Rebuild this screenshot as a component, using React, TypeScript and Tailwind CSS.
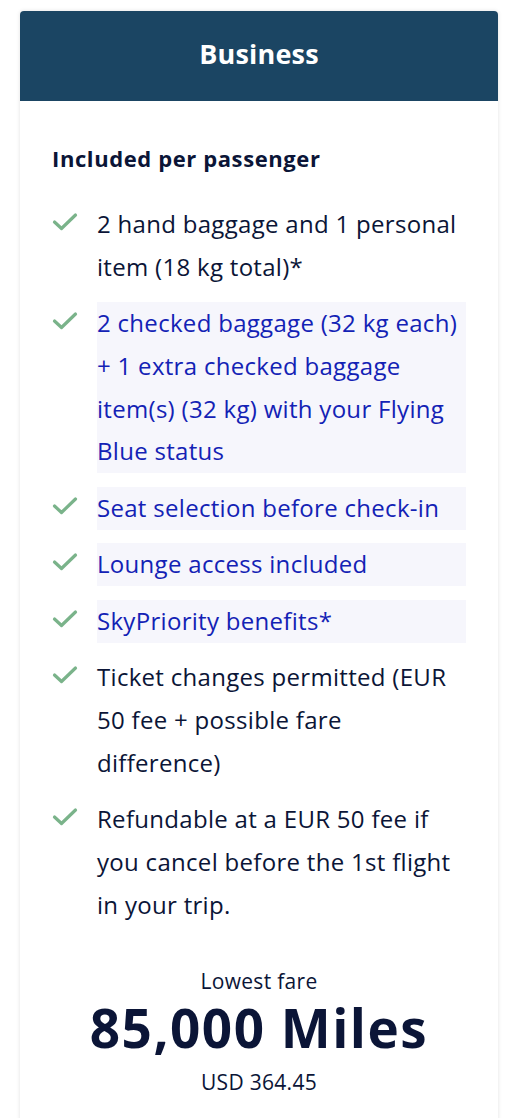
import React from "react";

interface Perk {
    text: string;
    link?: boolean;
}

const perks: Perk[] = [
    { text: "2 hand baggage and 1 personal item (18 kg total)*" },
    { text: "2 checked baggage (32 kg each) + 1 extra checked baggage item(s) (32 kg) with your Flying Blue status", link: true },
    { text: "Seat selection before check-in", link: true },
    { text: "Lounge access included", link: true },
    { text: "SkyPriority benefits*", link: true },
    { text: "Ticket changes permitted (EUR 50 fee + possible fare difference)" },
    { text: "Refundable at a EUR 50 fee if you cancel before the 1st flight in your trip." },
];

const Check: React.FC = () => (
    <svg width="26" height="20" viewBox="0 0 26 20" className="shrink-0 mt-[9px]">
        <path d="M2.5 10 L9.5 16.5 L23.5 3" fill="none" stroke="#7ab38a" strokeWidth="3.2" strokeLinecap="round" strokeLinejoin="round" />
    </svg>
);

const App: React.FC = () =>
{
    return (
        <div className="min-h-[1118px] bg-white pt-[11px] font-['Open_Sans',sans-serif]">
            <div className="mx-[20px] bg-white rounded-t-[4px] shadow-[0_0_4px_rgba(0,0,0,0.12)] overflow-hidden">
                <div className="h-[90px] pb-[4px] bg-[#1b4563] flex items-center justify-center">
                    <h1 className="text-white text-[27px] font-bold tracking-[0.2px]">Business</h1>
                </div>
                <div className="px-[32px] pt-[42px] pb-[30px]">
                    <h2 className="text-[#0b1537] text-[22px] font-bold leading-[30px] tracking-[0.6px]">Included per passenger</h2>
                    <ul className="mt-[30px] flex flex-col gap-[13.7px]">
                        {perks.map((p) => (
                            <li key={p.text} className="flex gap-[19px]">
                                <Check />
                                <span className={p.link
                                    ? "flex-1 bg-[#f6f6fc] text-[#1322b5] text-[24px] leading-[42.75px] tracking-[0.3px]"
                                    : "flex-1 text-[#0b1537] text-[24px] leading-[42.75px] tracking-[0.3px]"}>
                                    {p.text}
                                </span>
                            </li>
                        ))}
                    </ul>
                    <div className="mt-[42px] flex flex-col items-center text-[#0b1537]">
                        <span className="text-[21px] leading-[26px] tracking-[0.3px]">Lowest fare</span>
                        <span className="text-[53px] font-bold leading-[68px] tracking-[1.5px]">85,000 Miles</span>
                        <span className="text-[21px] leading-[40px] tracking-[0.3px]">USD 364.45</span>
                    </div>
                </div>
            </div>
        </div>
    );
};

export default App;
